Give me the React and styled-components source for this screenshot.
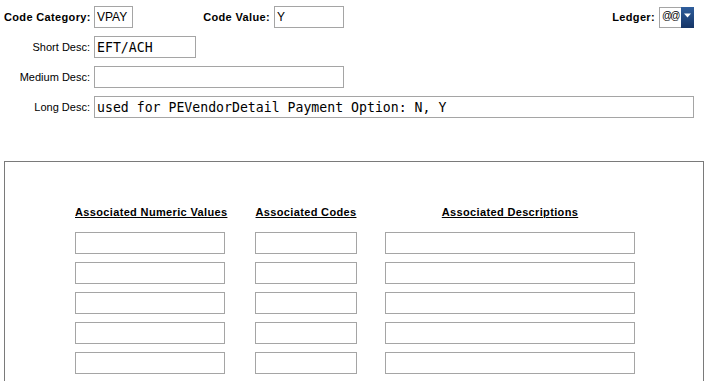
import styled, { createGlobalStyle } from 'styled-components';

const GlobalStyle = createGlobalStyle`
  body {
    margin: 0;
    background: #ffffff;
    font-family: "Liberation Sans", Arial, sans-serif;
  }
`;

const rows = [0, 1, 2, 3, 4];

export default function App() {
  return (
    <Page>
      <GlobalStyle />
      {/* header fields */}
      <Form>
        <Row>
          <Label $bold>Code Category:</Label>
          <Field $w={39} $sans defaultValue="VPAY" />
          <Label $bold $w={141}>Code Value:</Label>
          <Field $w={70} $sans defaultValue="Y" />
          <Spacer />
          <Label $bold $w="auto">Ledger:</Label>
          <Select>
            <SelectValue>@@</SelectValue>
            <SelectArrow>
              <svg width="7" height="5" viewBox="0 0 7 5">
                <path d="M0 0.5 H7 L3.5 4.5 Z" fill="#ffffff" />
              </svg>
            </SelectArrow>
          </Select>
        </Row>
        <Row>
          <Label>Short Desc:</Label>
          <Field $w={102} defaultValue="EFT/ACH" />
        </Row>
        <Row>
          <Label>Medium Desc:</Label>
          <Field $w={250} defaultValue="" />
        </Row>
        <Row>
          <Label>Long Desc:</Label>
          <Field $w={600} defaultValue="used for PEVendorDetail Payment Option: N, Y" />
        </Row>
      </Form>

      <Panel>
        <Table>
          <Heading>Associated Numeric Values</Heading>
          <Heading>Associated Codes</Heading>
          <Heading>Associated Descriptions</Heading>
          {rows.map((r) => (
            <Cells key={r}>
              <Cell />
              <Cell />
              <Cell />
            </Cells>
          ))}
        </Table>
      </Panel>
    </Page>
  );
}

const Page = styled.div`
  width: 708px;
  padding: 6px 14px 0 4px;
  box-sizing: border-box;
`;

const Form = styled.div`
  display: flex;
  flex-direction: column;
  gap: 8px;
`;

const Row = styled.div`
  display: flex;
  align-items: center;
  height: 22px;
`;

const Label = styled.label`
  box-sizing: border-box;
  width: ${(p) => (typeof p.$w === 'number' ? `${p.$w}px` : p.$w || '90px')};
  padding-right: 4px;
  text-align: right;
  font-size: 11px;
  font-weight: ${(p) => (p.$bold ? 700 : 400)};
  letter-spacing: ${(p) => (p.$bold ? '0.35px' : '0')};
  color: #000000;
  white-space: nowrap;
  flex-shrink: 0;
`;

const Field = styled.input`
  box-sizing: border-box;
  width: ${(p) => p.$w}px;
  height: 22px;
  margin: 0;
  padding: 0 2px;
  border: 1px solid #a5a5a5;
  border-radius: 0;
  outline: none;
  background: #ffffff;
  color: #000000;
  font-family: ${(p) =>
    p.$sans ? '"Liberation Sans", Arial, sans-serif' : '"DejaVu Sans Mono", monospace'};
  font-size: ${(p) => (p.$sans ? '12px' : '13.2px')};
`;

const Spacer = styled.div`
  flex: 1;
`;

const Select = styled.div`
  display: flex;
  width: 35px;
  height: 21px;
  box-sizing: border-box;
  border: 1px solid #a5a5a5;
  border-right: none;
  background: #ffffff;
`;

const SelectValue = styled.span`
  flex: 1;
  padding-left: 2px;
  overflow: hidden;
  font-size: 10px;
  letter-spacing: -2px;
  line-height: 16px;
  color: #000000;
`;

const SelectArrow = styled.span`
  display: flex;
  align-items: flex-start;
  justify-content: center;
  padding-top: 6px;
  box-sizing: border-box;
  width: 13px;
  margin-top: -1px;
  height: 21px;
  background: linear-gradient(#2f5e9c, #143466);
`;

const Panel = styled.div`
  margin-top: 43px;
  width: 700px;
  height: 220px;
  box-sizing: border-box;
  border: 1px solid #7a7a7a;
  border-bottom: none;
  padding: 43px 0 0 70px;
`;

const Table = styled.div`
  display: grid;
  grid-template-columns: 150px 30px 102px 28px 250px;
  row-gap: 8px;
  width: 560px;
`;

const Heading = styled.div`
  text-align: center;
  white-space: nowrap;
  font-size: 11px;
  font-weight: 700;
  letter-spacing: 0.35px;
  text-decoration: underline;
  color: #000000;
  line-height: 14px;
  margin-bottom: 5px;
  &:nth-child(1) { grid-column: 1; }
  &:nth-child(2) { grid-column: 3; }
  &:nth-child(3) { grid-column: 5; }
`;

const Cells = styled.div`
  display: contents;
`;

const Cell = styled.input`
  box-sizing: border-box;
  width: 100%;
  height: 22px;
  margin: 0;
  border: 1px solid #a5a5a5;
  border-radius: 0;
  outline: none;
  background: #ffffff;
  &:nth-child(1) { grid-column: 1; }
  &:nth-child(2) { grid-column: 3; }
  &:nth-child(3) { grid-column: 5; }
`;
